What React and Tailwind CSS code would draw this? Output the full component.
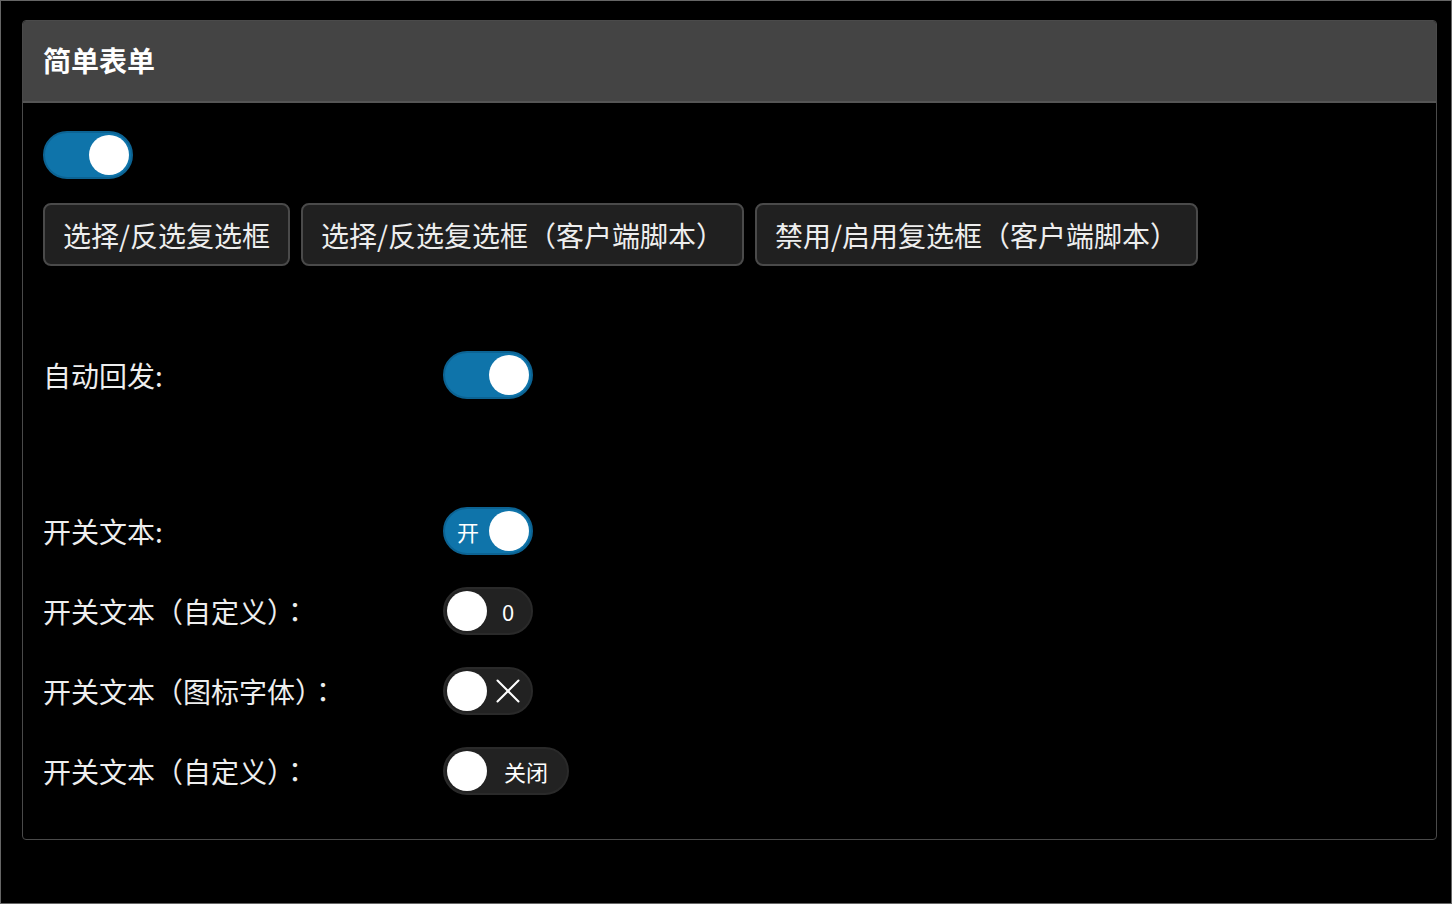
import { X } from 'lucide-react';

const font = { fontFamily: '"Noto Sans CJK SC", "Noto Sans", sans-serif' };

const Toggle = ({ on, label, icon, wide }) => (
    <div
        className={`flex items-center h-[48px] rounded-full border-2 ${wide ? 'w-[126px]' : 'w-[90px]'} ${
            on ? 'bg-[#0f74aa] border-[#0c6393] flex-row-reverse' : 'bg-[#222222] border-[#2a2a2a]'
        } px-[2px]`}
    >
        <div className="w-[40px] h-[40px] rounded-full bg-white shrink-0" />
        <div className="flex-1 flex items-center justify-center text-[22px] text-white leading-none">
            {icon ? <X size={42} strokeWidth={1.15} /> : label}
        </div>
    </div>
);

// 全角冒号居中显示
const Colon = () => <span style={{ fontFamily: '"Noto Sans CJK TC", sans-serif' }}>：</span>;

const Row = ({ label, children, className = '' }) => (
    <div className={`flex items-center ${className}`}>
        <div className="w-[400px] text-[28px] text-[#eeeeee] leading-none">{label}</div>
        {children}
    </div>
);

const Btn = ({ children }) => (
    <button className="h-[63px] px-[18px] rounded-[8px] bg-[#202020] border-2 border-[#4a4a4a] text-[28px] text-[#eeeeee] leading-none">
        {children}
    </button>
);

const App = () => {
    return (
        <div className="w-[1452px] h-[904px] bg-black border border-[#666] pl-[21px] pt-[19px]" style={font}>
            <div className="w-[1415px] border border-[#4a4a4a] rounded-[4px] overflow-hidden">
                <div className="h-[82px] bg-[#444444] border-b-2 border-[#555] flex items-center pl-[20px]">
                    <h1 className="text-[28px] font-bold text-white leading-none -mt-[2px]">简单表单</h1>
                </div>
                <div className="pl-[20px] pt-[28px] pb-[44px]">
                    <Toggle on />
                    <div className="flex gap-[11px] mt-[24px]">
                        <Btn>选择/反选复选框</Btn>
                        <Btn>选择/反选复选框（客户端脚本）</Btn>
                        <Btn>禁用/启用复选框（客户端脚本）</Btn>
                    </div>
                    <Row label="自动回发:" className="mt-[85px]">
                        <Toggle on />
                    </Row>
                    <Row label="开关文本:" className="mt-[108px]">
                        <Toggle on label="开" />
                    </Row>
                    <Row label={<>开关文本（自定义）<Colon /></>} className="mt-[32px]">
                        <Toggle label="0" />
                    </Row>
                    <Row label={<>开关文本（图标字体）<Colon /></>} className="mt-[32px]">
                        <Toggle icon />
                    </Row>
                    <Row label={<>开关文本（自定义）<Colon /></>} className="mt-[32px]">
                        <Toggle label="关闭" wide />
                    </Row>
                </div>
            </div>
        </div>
    );
};

export default App;
